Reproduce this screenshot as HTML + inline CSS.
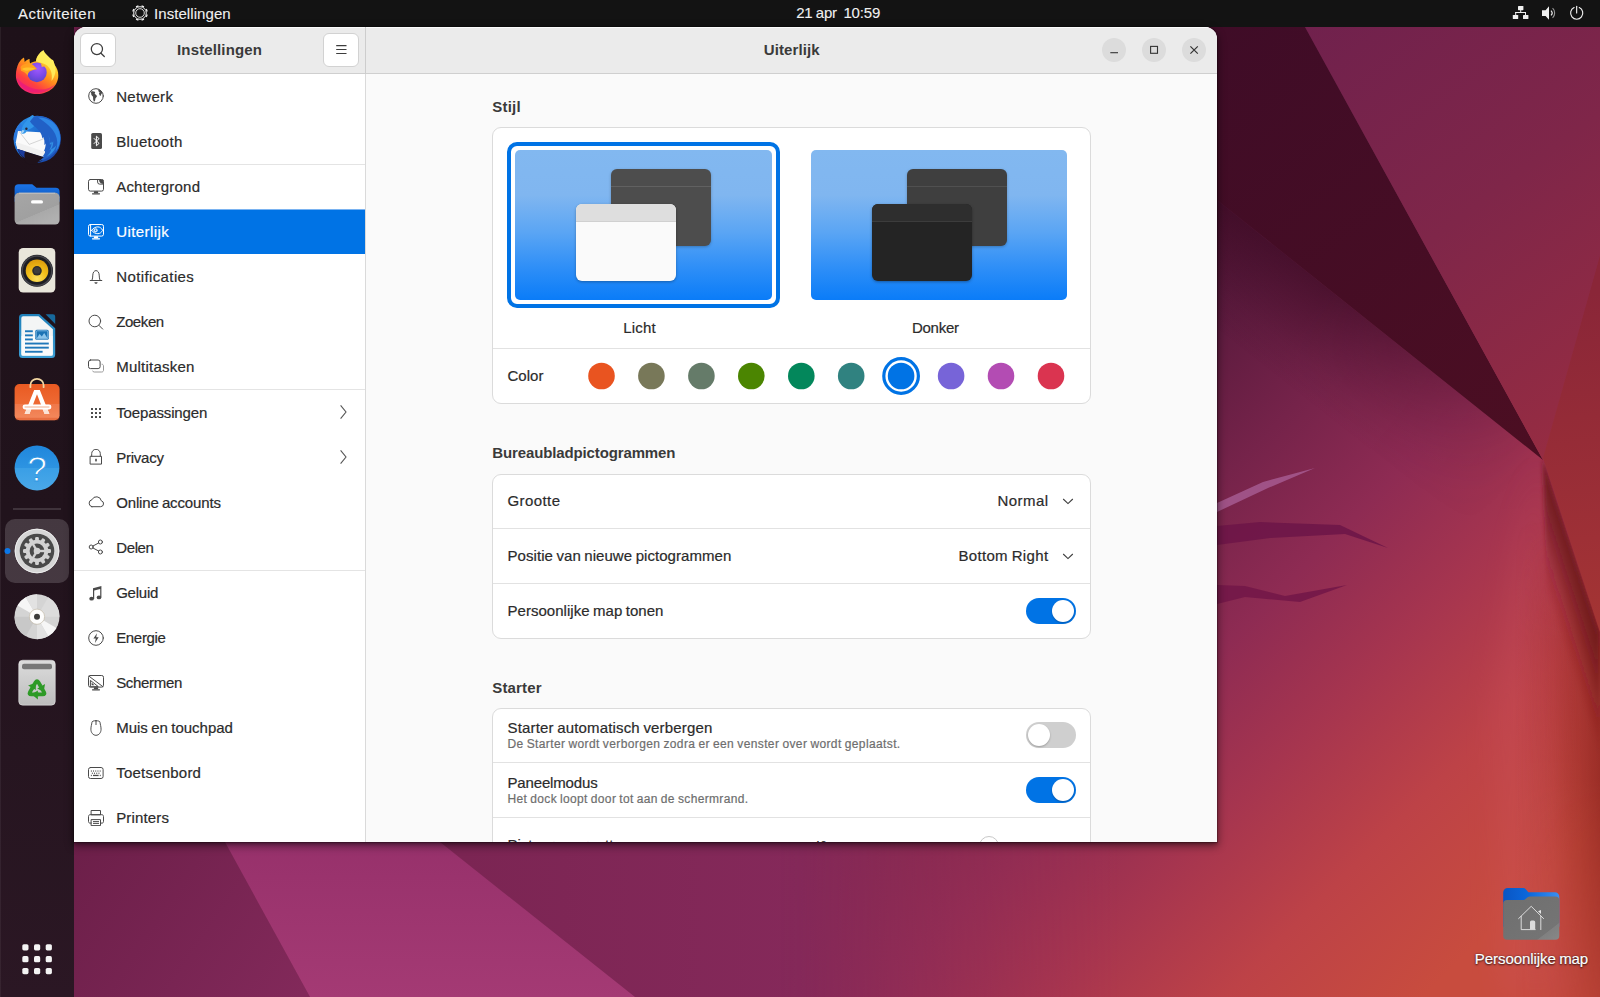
<!DOCTYPE html>
<html lang="nl"><head><meta charset="utf-8"><title>Instellingen</title>
<style>
html,body{margin:0;padding:0;width:1600px;height:997px;overflow:hidden;background:#300a24;}
body{position:relative;font-family:"Liberation Sans", sans-serif;font-size:15px;color:#2e2e2e;-webkit-font-smoothing:antialiased;}
div,svg{box-sizing:border-box;}
.abs{position:absolute;}

</style></head><body>
<svg class="abs" style="left:0;top:0" width="1600" height="997" viewBox="0 0 1600 997">
<defs>
<linearGradient id="wbase" x1="0" y1="0" x2="1600" y2="0" gradientUnits="userSpaceOnUse">
<stop offset="0" stop-color="#661c45"/><stop offset=".14" stop-color="#74224e"/><stop offset=".5" stop-color="#85295a"/>
<stop offset=".69" stop-color="#a63351"/><stop offset=".86" stop-color="#c54942"/><stop offset="1" stop-color="#c44a3a"/>
</linearGradient>
<linearGradient id="wD" x1="1217" y1="203" x2="1717" y2="703" gradientUnits="userSpaceOnUse">
<stop offset="0" stop-color="#4e1434"/><stop offset=".1" stop-color="#5a1a3d"/><stop offset=".28" stop-color="#75234a"/>
<stop offset=".45" stop-color="#8e2b53"/><stop offset=".62" stop-color="#a6354f"/><stop offset=".8" stop-color="#bd4247"/><stop offset="1" stop-color="#c84c3e"/>
</linearGradient>
<linearGradient id="mfade" x1="780" y1="0" x2="1120" y2="0" gradientUnits="userSpaceOnUse">
<stop offset="0" stop-color="#000"/><stop offset="1" stop-color="#fff"/>
</linearGradient>
<mask id="mD" maskUnits="userSpaceOnUse" x="0" y="0" width="1600" height="997"><rect width="1600" height="997" fill="url(#mfade)"/></mask>
<linearGradient id="wB" x1="1305" y1="27" x2="1600" y2="420" gradientUnits="userSpaceOnUse">
<stop offset="0" stop-color="#70214d"/><stop offset=".5" stop-color="#7f2649"/><stop offset="1" stop-color="#962c42"/>
</linearGradient>
<linearGradient id="wA" x1="1217" y1="27" x2="1543" y2="460" gradientUnits="userSpaceOnUse">
<stop offset="0" stop-color="#3f0c27"/><stop offset="1" stop-color="#4c0e22"/>
</linearGradient>
<linearGradient id="wC" x1="1543" y1="300" x2="1600" y2="700" gradientUnits="userSpaceOnUse">
<stop offset="0" stop-color="#8a2638"/><stop offset=".6" stop-color="#9e3036"/><stop offset="1" stop-color="#a83830"/>
</linearGradient>
<!-- crease shadow: perpendicular to line apex(1543,460)->(1600,640); vector points to the left of the line -->
<linearGradient id="wRidge" x1="1543" y1="460" x2="1428.6" y2="496.2" gradientUnits="userSpaceOnUse">
<stop offset="0" stop-color="#6e1a20" stop-opacity=".95"/><stop offset=".1" stop-color="#7a1e24" stop-opacity=".8"/><stop offset=".28" stop-color="#902830" stop-opacity=".4"/>
<stop offset=".42" stop-color="#c0445a" stop-opacity=".0"/><stop offset=".55" stop-color="#c8506a" stop-opacity=".22"/><stop offset=".8" stop-color="#c8506a" stop-opacity="0"/>
</linearGradient>
<linearGradient id="wTri" x1="0" y1="842" x2="0" y2="997" gradientUnits="userSpaceOnUse">
<stop offset="0" stop-color="#97316b"/><stop offset="1" stop-color="#a43a74"/>
</linearGradient>
<linearGradient id="wLeft" x1="74" y1="842" x2="300" y2="997" gradientUnits="userSpaceOnUse">
<stop offset="0" stop-color="#6c1f49"/><stop offset="1" stop-color="#82295a"/>
</linearGradient>
<linearGradient id="wEdge" x1="1500" y1="0" x2="1600" y2="0" gradientUnits="userSpaceOnUse">
<stop offset="0" stop-color="#a02a20" stop-opacity="0"/><stop offset="1" stop-color="#a02a20" stop-opacity=".55"/>
</linearGradient>
<filter id="bl9" x="-50%" y="-20%" width="200%" height="140%"><feGaussianBlur stdDeviation="7"/></filter>
<filter id="bl12" x="-50%" y="-20%" width="200%" height="140%"><feGaussianBlur stdDeviation="14"/></filter>
<filter id="bl14" x="-20%" y="-30%" width="140%" height="160%"><feGaussianBlur stdDeviation="13"/></filter>
<clipPath id="cLeft"><polygon points="1543,458 1600,632 1600,997 1200,997 1200,458"/></clipPath>
<linearGradient id="wSh" x1="1380" y1="330" x2="1318" y2="408.500" gradientUnits="userSpaceOnUse">
<stop offset="0" stop-color="#3a0a22" stop-opacity=".6"/><stop offset=".35" stop-color="#3a0a22" stop-opacity=".36"/><stop offset=".7" stop-color="#3a0a22" stop-opacity=".12"/><stop offset="1" stop-color="#3a0a22" stop-opacity="0"/>
</linearGradient>
<linearGradient id="gAlong" x1="1330" y1="290" x2="1535" y2="453.500" gradientUnits="userSpaceOnUse"><stop offset="0" stop-color="#fff"/><stop offset="1" stop-color="#000"/></linearGradient>
<mask id="mSh" maskUnits="userSpaceOnUse" x="1000" y="0" width="600" height="700"><rect x="1000" y="0" width="600" height="700" fill="url(#gAlong)"/></mask>
<linearGradient id="wCrease" x1="1543" y1="458" x2="1506" y2="470.100" gradientUnits="userSpaceOnUse">
<stop offset="0" stop-color="#6c181c" stop-opacity=".95"/><stop offset=".3" stop-color="#6c181c" stop-opacity=".68"/><stop offset=".65" stop-color="#6c181c" stop-opacity=".24"/><stop offset="1" stop-color="#6c181c" stop-opacity="0"/>
</linearGradient>
<linearGradient id="wEdgeH" x1="1515" y1="0" x2="1600" y2="0" gradientUnits="userSpaceOnUse">
<stop offset="0" stop-color="#86201a" stop-opacity="0"/><stop offset=".45" stop-color="#86201a" stop-opacity=".16"/><stop offset=".75" stop-color="#86201a" stop-opacity=".4"/><stop offset="1" stop-color="#86201a" stop-opacity=".66"/>
</linearGradient>
<linearGradient id="wEdgeV" x1="0" y1="520" x2="0" y2="997" gradientUnits="userSpaceOnUse">
<stop offset="0" stop-color="#000"/><stop offset=".25" stop-color="#fff"/><stop offset=".55" stop-color="#fff"/><stop offset="1" stop-color="#6a6a6a"/>
</linearGradient>
<mask id="mEdge" maskUnits="userSpaceOnUse" x="1490" y="520" width="110" height="477"><rect x="1490" y="520" width="110" height="477" fill="url(#wEdgeV)"/></mask>
<filter id="bl2" x="-30%" y="-10%" width="160%" height="120%"><feGaussianBlur stdDeviation="2.200"/></filter>
</defs>
<rect width="1600" height="997" fill="url(#wbase)"/>
<rect x="780" width="820" height="997" fill="url(#wD)" mask="url(#mD)"/>
<!-- soft shadow under wedge edge -->
<polygon points="1150,146.600 1543,460 1480,540 1087,226" fill="url(#wSh)" mask="url(#mSh)"/>
<!-- dark wedge -->
<polygon points="1000,27 1305,27 1543,460 1217,200 1000,27" fill="url(#wA)"/>
<!-- upper lighter facet -->
<polygon points="1305,27 1600,27 1600,255 1543,460" fill="url(#wB)"/>
<!-- right facet -->
<polygon points="1600,255 1543,458 1600,632" fill="url(#wC)"/>
<!-- crease shadow left of the line below apex -->
<g clip-path="url(#cLeft)">
<polygon points="1543,462 1518,540 1492,700 1500,997 1575,997 1550,700 1540,540" fill="#d0566c" opacity=".2" filter="url(#bl12)"/>
<rect x="1490" y="520" width="110" height="477" fill="url(#wEdgeH)" mask="url(#mEdge)"/>
<polygon points="1543,458 1600,632 1600,790 1552,790" fill="url(#wCrease)" filter="url(#bl2)"/>
</g>
<!-- tentacles -->
<polygon points="1217,503 1263,482 1315,468 1268,488 1217,512" fill="#a65a90" opacity=".85"/>
<polygon points="1217,526 1260,522 1340,525 1388,548 1345,534 1270,538 1217,545" fill="#6e1648" opacity=".9"/>
<polygon points="1217,585 1245,586 1285,596 1347,585 1300,602 1245,597 1217,604" fill="#731748" opacity=".9"/>
<!-- bottom-left facets -->
<polygon points="0,700 225,842 310,997 0,997" fill="url(#wLeft)"/>
<polygon points="225,842 440,842 635,997 310,997" fill="url(#wTri)"/>
</svg><div class="abs" style="left:0;top:0;width:1600px;height:27px;background:#131313"></div><div style="position:absolute;left:18px;top:3.5px;height:20px;line-height:20px;font-size:15px;font-weight:400;color:#f0f0f0;white-space:pre;letter-spacing:0.45px;-webkit-text-stroke:0.1px;">Activiteiten</div><div style="position:absolute;left:154px;top:3.5px;height:20px;line-height:20px;font-size:15px;font-weight:400;color:#f0f0f0;white-space:pre;letter-spacing:0.07px;-webkit-text-stroke:0.1px;">Instellingen</div><div style="position:absolute;left:538.2px;width:600px;text-align:center;margin-left:-0.08px;top:2.5px;height:20px;line-height:20px;font-size:15px;font-weight:400;color:#f0f0f0;white-space:pre;letter-spacing:-0.17px;word-spacing:-0.75px;-webkit-text-stroke:0.1px;">21 apr  10:59</div><svg class="abs" style="left:131px;top:4px" width="18" height="18" viewBox="-9 -9 18 18" fill="none" stroke="#f0f0f0"><circle r="4.300" stroke-width=".9"/><circle r="6.300" stroke-width="1"/><line x1="6.10" y1="2.53" x2="7.30" y2="3.02" stroke-width="2.600" stroke-linecap="butt"/><line x1="2.53" y1="6.10" x2="3.02" y2="7.30" stroke-width="2.600" stroke-linecap="butt"/><line x1="-2.53" y1="6.10" x2="-3.02" y2="7.30" stroke-width="2.600" stroke-linecap="butt"/><line x1="-6.10" y1="2.53" x2="-7.30" y2="3.02" stroke-width="2.600" stroke-linecap="butt"/><line x1="-6.10" y1="-2.53" x2="-7.30" y2="-3.02" stroke-width="2.600" stroke-linecap="butt"/><line x1="-2.53" y1="-6.10" x2="-3.02" y2="-7.30" stroke-width="2.600" stroke-linecap="butt"/><line x1="2.53" y1="-6.10" x2="3.02" y2="-7.30" stroke-width="2.600" stroke-linecap="butt"/><line x1="6.10" y1="-2.53" x2="7.30" y2="-3.02" stroke-width="2.600" stroke-linecap="butt"/></svg><svg class="abs" style="left:1512px;top:5px" width="17" height="15" viewBox="0 0 17 15" fill="#f0f0f0">
<rect x="6" y="1" width="5.4" height="4.2" rx=".6"/><rect x="8.2" y="5" width="1" height="2.4"/>
<rect x="3.2" y="7" width="10.8" height="1"/><rect x="3.2" y="7" width="1" height="3"/><rect x="13" y="7" width="1" height="3"/>
<rect x=".8" y="10" width="5.4" height="4" rx=".6"/><rect x="11" y="10" width="5.4" height="4" rx=".6"/></svg><svg class="abs" style="left:1540px;top:4px" width="18" height="18" viewBox="0 0 18 18">
<path d="M2 6.2h3.6L9 2.2v13.6L5.6 11.9H2z" fill="#f0f0f0"/>
<path d="M11 6.6a3.4 3.4 0 0 1 0 4.8" fill="none" stroke="#f0f0f0" stroke-width="1.2"/>
<path d="M12.6 4.2a6.6 6.6 0 0 1 0 9.6" fill="none" stroke="#9a9a9a" stroke-width="1.1"/></svg><svg class="abs" style="left:1568px;top:4px" width="18" height="18" viewBox="0 0 18 18" fill="none" stroke="#f0f0f0" stroke-width="1.15" stroke-linecap="round">
<path d="M6.1 3.6a6.1 6.1 0 1 0 5.2 0"/><path d="M8.65 2.2v6.8"/></svg><div class="abs" style="left:0;top:27px;width:74px;height:970px;background:linear-gradient(#1e1119 0%,#21131c 50%,#2b1724 100%)"></div><div class="abs" style="left:0;top:27px;width:1px;height:970px;background:rgba(255,255,255,.06)"></div><svg class="abs" style="left:0;top:27px" width="74" height="970" viewBox="0 27 74 970"><defs>
<linearGradient id="ffg" x1="52" y1="52" x2="24" y2="93" gradientUnits="userSpaceOnUse"><stop offset="0" stop-color="#fff36b"/><stop offset=".25" stop-color="#ffd02c"/><stop offset=".5" stop-color="#ff8c1c"/><stop offset=".75" stop-color="#ff4040"/><stop offset="1" stop-color="#f0207a"/></linearGradient>
<radialGradient id="ffp" cx=".55" cy=".3" r=".75"><stop offset="0" stop-color="#a05aff"/><stop offset=".55" stop-color="#7b4ae8"/><stop offset="1" stop-color="#5546c8"/></radialGradient>
<linearGradient id="ffl" x1="0" y1="0" x2="1" y2="1"><stop offset="0" stop-color="#ff9a1e"/><stop offset=".6" stop-color="#ffa51e"/><stop offset="1" stop-color="#ff8a16"/></linearGradient>
<linearGradient id="tbg" x1="0" y1="0" x2="1" y2="1"><stop offset="0" stop-color="#2f9bf0"/><stop offset=".5" stop-color="#1b63c9"/><stop offset="1" stop-color="#1a3fa0"/></linearGradient>
<linearGradient id="fig" x1="0" y1="0" x2=".6" y2="1"><stop offset="0" stop-color="#a6a6a6"/><stop offset=".7" stop-color="#a0a0a0"/><stop offset=".71" stop-color="#a9a9a9"/><stop offset="1" stop-color="#b0b0b0"/></linearGradient>
<linearGradient id="fib" x1="0" y1="0" x2="0" y2="1"><stop offset="0" stop-color="#1b74e8"/><stop offset="1" stop-color="#0b54b8"/></linearGradient>
<radialGradient id="rby" cx=".5" cy=".85" r=".9"><stop offset="0" stop-color="#fbe060"/><stop offset=".45" stop-color="#f2c01a"/><stop offset="1" stop-color="#d8960a"/></radialGradient>
<linearGradient id="swg" x1="0" y1="0" x2="0" y2="1"><stop offset="0" stop-color="#e95a22"/><stop offset=".55" stop-color="#ee6a34"/><stop offset=".56" stop-color="#f0784a"/><stop offset="1" stop-color="#f28a5e"/></linearGradient>
<linearGradient id="hpg" x1="0" y1="0" x2="0" y2="1"><stop offset="0" stop-color="#1f86dc"/><stop offset=".5" stop-color="#2d94e2"/><stop offset=".51" stop-color="#3a9fe6"/><stop offset="1" stop-color="#4aa8e8"/></linearGradient>
<linearGradient id="trg" x1="0" y1="0" x2="0" y2="1"><stop offset="0" stop-color="#dcdcdc"/><stop offset="1" stop-color="#bdbdbd"/></linearGradient>
<linearGradient id="wrg" x1="0" y1="0" x2="0" y2="1"><stop offset="0" stop-color="#1f7fb8"/><stop offset="1" stop-color="#3b9ed4"/></linearGradient>
</defs><g>
<path d="M24 57.500C24.400 59.200 24.400 60.600 24.700 61.900C26.200 60.200 28 59.200 29.600 58.900C29.500 60.500 29.700 62.200 30.200 63.400C32 62.300 34.200 61.500 36 61.300C36.300 57 39.500 52.500 43.400 50.200C44.500 53.500 48.500 56.500 51.800 59.700L52.900 60C53.600 61.500 54.200 63.200 54.600 64.800C57 67.800 58.400 71.600 58.300 75.500C58.300 86 49 94 37.200 94C25 94 15.900 86 15.900 75.500C15.900 70.500 17.200 66 18.700 63.100C20 60.800 22 58.600 24 57.500Z" fill="url(#ffg)"/>
<path d="M36 61.300C36.300 57 39.500 52.500 43.400 50.200C44.500 53.500 48.500 56.500 51.800 59.700L52.900 60C54 62 54.600 64.800 54.600 64.800C56.500 69.500 55.500 76.500 51.500 81C53 73 50 67 45.500 64.600C42.500 63.200 39 62.500 36 61.300Z" fill="#fff162" opacity=".85"/>
<path d="M17 78c1.500 7.500 9 14.200 19.500 14.800 8 .4 15-3 19-8.800-4.500 4.200-11 6.200-17.800 5.300-9.500-1.300-16.500-6.300-20.700-11.300z" fill="#e3118a" opacity=".55"/>
<circle cx="36.900" cy="72.400" r="9.800" fill="url(#ffp)"/>
<path d="M40.500 63.400C42.600 63.900 44.600 65.200 45.700 66.900C44.100 66.200 42.800 66.300 41.700 66.900C41.800 65.500 41.300 64.400 40.500 63.400Z" fill="#ffb52a"/>
<path d="M20.500 67C22.500 64.400 27 63 30.200 63.400C32.500 64.200 34.800 66.300 37.200 69.200C34.500 69.600 31.500 70 29.600 71.600C28.300 72.700 27.600 74.200 27.800 76C26.300 73.200 23.500 71.300 21 70.800Z" fill="url(#ffl)"/>
<path d="M22 68.900C25 67.200 31 67 35.600 68.700C32 69.700 29.500 70.100 27.500 70.700C25.500 70.700 23.400 70.100 22 68.900Z" fill="#ffc62e" opacity=".9"/>
</g><g>
<circle cx="37.200" cy="139.300" r="23.600" fill="url(#tbg)"/>
<path d="M13.600 139.300a23.600 23.600 0 0 1 6.800-16.600l3.400 6.600-5.800 14.600z" fill="#2a7ae0"/>
<path d="M18 130.900l26.700 1.600 2.800 4-3.300 20.800-26.700-8.400-1.700-6.500z" fill="#fafafa"/>
<path d="M15.800 142.400l1.700 6.500 26.700 8.400 1-5.200-26-9.200z" fill="#f0f0f0"/>
<path d="M19.200 131.600l10 12.800 17-6.600" fill="none" stroke="#c4c4c4" stroke-width=".7" stroke-linejoin="round"/>
<path d="M17.500 148.900l26.700 8.400-2.200 3.400-4.200 1.700-1 2.600-9.600-1.200-4.800-6.200-3-4.400z" fill="#1f121a"/>
<path d="M17.500 148.900c.8 3 3.500 6.800 7.400 9.200-.8-2.400-.6-4.800.2-6.900z" fill="#1a3a9a"/>
<path d="M21.600 133.800c-.6-4.600 1.200-9.200 4.400-12.200 1.600-2.800 4-5.200 6.400-6.600 1 .2 1.600.8 1.600 1.600 5.400-.8 11.200.6 15.600 4-5.600-.8-10.400.6-13.800 3.400-1.800 2.600-3.800 4.200-6 5-1.800.6-3 1.600-3.800 3.200-.6 1.200-2.400 1.600-4.400 1.600z" fill="#3296ea"/>
<path d="M21.600 133.800c1.200-.6 2.400-1.800 3-3.200l-2.400-.6z" fill="#a8d4f6"/>
<path d="M34 116.600c9.500-2 19.600 2.400 24.200 11.200 4.400 8.600 2.600 19.200-4.400 25.800-3.600 3.400-8.400 6.200-15.600 8 2.600-1.800 4.800-3.600 6-5.200l-2.200.6c2-2.200 3.200-4.400 3.600-6.600l-1.800 1c1.400-2.600 2-5.200 1.800-7.800l-1.400 1.600c.6-3 .2-5.800-1-8.200l-.8 1.600c-.6-4.400-2.800-8.200-6.200-10.800-2.600-2-4.600-3.800-6.200-6.200 1.400-2 3-3.600 4-5z" fill="#2160c6"/>
<path d="M38 117.500c8.200-.4 16.200 3.800 20 11.400 3.600 7.200 2.800 16-2.200 22.400 2.200-5.800 2-12-.6-17.400-3-6.200-8.800-10.800-17.200-16.400z" fill="#2e86e4"/>
<path d="M47.600 134.600c1.800 2.400 2.600 5.400 2.400 8.600l1.600-1.800c.2 3-.6 6-2.200 8.600l2-1c-.8 3-2.600 5.600-5 7.800 5-2.400 8.600-6.600 10-11.600-1.600 2-3.600 3.400-5.400 4 1.600-2.400 2.400-5.200 2.200-8-.8 1.600-2 2.800-3.400 3.600.4-3.600-.4-7.200-2.200-10.200z" fill="#3aa0ee" opacity=".75"/>
<circle cx="26.400" cy="128.800" r="1.200" fill="#2a2230"/>
</g><g>
<path d="M14.600 188.300a4 4 0 0 1 4-4h13.600l4.300 3.400h19.100a4 4 0 0 1 4 4v10h-45z" fill="url(#fib)"/>
<rect x="14.600" y="192.800" width="45" height="31.700" rx="4.500" fill="url(#fig)"/>
<path d="M19 193.200h36.200" stroke="#d2d2d2" stroke-width=".9" opacity=".8"/>
<rect x="31" y="200.300" width="12" height="3.300" rx="1.600" fill="#fff"/>
</g><g>
<rect x="18.700" y="248" width="36.600" height="44.600" rx="4.500" fill="#e9e6db"/>
<circle cx="37" cy="270.800" r="16" fill="#1d1d22"/>
<circle cx="37" cy="270.800" r="14.800" fill="none" stroke="#45454c" stroke-width="1.500"/>
<circle cx="37" cy="270.800" r="11.300" fill="url(#rby)"/>
<circle cx="37" cy="270.800" r="4.800" fill="#2c2c2c"/>
<circle cx="37" cy="270.400" r="3.200" fill="#444" opacity=".7"/>
</g><g>
<path d="M22.500 314h16.800l15.900 14.300v26.200a3.500 3.500 0 0 1-3.500 3.500h-29.200a3.500 3.500 0 0 1-3.500-3.500v-37a3.500 3.500 0 0 1 3.500-3.500z" fill="url(#wrg)"/>
<path d="M23.200 316.300h15.300l14.400 13v24.600a1.900 1.900 0 0 1-1.900 1.900h-27.800a1.900 1.900 0 0 1-1.900-1.900v-35.700a1.900 1.900 0 0 1 1.900-1.900z" fill="#f4f5f5"/>
<path d="M21.300 336h31.600v17.900a1.900 1.900 0 0 1-1.900 1.900h-27.800a1.900 1.900 0 0 1-1.900-1.900z" fill="#fff" opacity=".55"/>
<path d="M45.600 314.300h7.300a2.300 2.300 0 0 1 2.300 2.300v7.400z" fill="#17699c"/>
<rect x="35.200" y="329.800" width="13.600" height="10" rx="1.600" fill="#1b72b4"/>
<path d="M36.600 338.600l3-4.600 2.200 2.600 2.400-3.600 3.400 5.600z" fill="#8cc4ea"/>
<rect x="36.200" y="330.800" width="11.600" height="8" rx="1" fill="none" stroke="#9fd0ef" stroke-width=".7"/>
<rect x="25" y="330.300" width="7.800" height="1.900" fill="#1f78ba"/><rect x="25" y="334.400" width="7.800" height="1.900" fill="#1f78ba"/><rect x="25" y="338.500" width="7.800" height="1.900" fill="#1f78ba"/>
<rect x="25" y="342.600" width="23.800" height="1.900" fill="#1f78ba"/><rect x="25" y="346.700" width="23.800" height="1.900" fill="#1f78ba"/><rect x="25" y="350.800" width="17.600" height="1.900" fill="#1f78ba"/>
</g><g>
<rect x="14.600" y="384" width="45" height="36.200" rx="5" fill="url(#swg)"/>
<rect x="15.600" y="417.800" width="43" height="2.400" rx="1.200" fill="#d9481a" opacity=".4"/>
<path d="M30.400 387.200v-2a6.600 6.400 0 0 1 13.200 0v2" fill="none" stroke="#f3d7a2" stroke-width="1.800" stroke-linecap="round"/>
<path d="M24.600 414l9.600-24h5.600l9.600 24h-4.800l-7.600-19.800-7.600 19.800z" fill="#fff"/>
<path d="M24.600 414l3-7.600h4.800l-3 7.600zM49.400 414l-3-7.600h-4.800l3 7.600z" fill="#fbe3d6"/>
<rect x="22.600" y="404.600" width="28.800" height="4.800" rx="2.400" fill="#fff"/>
<rect x="24.400" y="406.300" width="25.200" height="1.400" rx=".7" fill="#f6c9b4"/>
</g><g>
<circle cx="37" cy="468" r="22.400" fill="url(#hpg)"/>
<text x="37" y="480.500" text-anchor="middle" font-family="'Liberation Sans',sans-serif" font-size="35" fill="#fff" stroke="#2f96e3" stroke-width=".9">?</text>
</g><rect x="13" y="508.500" width="48" height="1" fill="#fff" opacity=".28"/><rect x="5" y="519" width="64" height="64" rx="10" fill="#fff" opacity=".16"/><circle cx="7.500" cy="551" r="3" fill="#0b78ea"/><g transform="translate(37 551)"><circle r="22.300" fill="#d6d6d6"/><circle r="21.800" fill="none" stroke="#ececec" stroke-width="1"/><circle r="17.300" fill="#4a4a4a"/><rect x="-1.900" y="-14" width="3.800" height="5" rx="1.200" fill="#d2d2d2" transform="rotate(0)"/><rect x="-1.900" y="-14" width="3.800" height="5" rx="1.200" fill="#d2d2d2" transform="rotate(30)"/><rect x="-1.900" y="-14" width="3.800" height="5" rx="1.200" fill="#d2d2d2" transform="rotate(60)"/><rect x="-1.900" y="-14" width="3.800" height="5" rx="1.200" fill="#d2d2d2" transform="rotate(90)"/><rect x="-1.900" y="-14" width="3.800" height="5" rx="1.200" fill="#d2d2d2" transform="rotate(120)"/><rect x="-1.900" y="-14" width="3.800" height="5" rx="1.200" fill="#d2d2d2" transform="rotate(150)"/><rect x="-1.900" y="-14" width="3.800" height="5" rx="1.200" fill="#d2d2d2" transform="rotate(180)"/><rect x="-1.900" y="-14" width="3.800" height="5" rx="1.200" fill="#d2d2d2" transform="rotate(210)"/><rect x="-1.900" y="-14" width="3.800" height="5" rx="1.200" fill="#d2d2d2" transform="rotate(240)"/><rect x="-1.900" y="-14" width="3.800" height="5" rx="1.200" fill="#d2d2d2" transform="rotate(270)"/><rect x="-1.900" y="-14" width="3.800" height="5" rx="1.200" fill="#d2d2d2" transform="rotate(300)"/><rect x="-1.900" y="-14" width="3.800" height="5" rx="1.200" fill="#d2d2d2" transform="rotate(330)"/><circle r="11.300" fill="#d2d2d2"/><circle r="7.400" fill="#4a4a4a"/><circle r="3.300" fill="#d2d2d2"/><rect x="-1.200" y="-8" width="2.400" height="8" fill="#d2d2d2" transform="rotate(90)"/><rect x="-1.200" y="-8" width="2.400" height="8" fill="#d2d2d2" transform="rotate(210)"/><rect x="-1.200" y="-8" width="2.400" height="8" fill="#d2d2d2" transform="rotate(330)"/></g><g transform="translate(37 616.700)"><circle r="22.500" fill="#d4d4d4"/><path d="M0 0L-19.500 -11.200A22.500 22.500 0 0 1 -11.200 -19.500z" fill="#f6f6f6"/><path d="M0 0L19.500 11.200A22.500 22.500 0 0 1 11.200 19.500z" fill="#f6f6f6"/><path d="M0 0L-11.200 -19.500A22.500 22.500 0 0 1 0 -22.500z" fill="#e2e2e2"/><path d="M0 0L11.200 19.500A22.500 22.500 0 0 1 0 22.500z" fill="#e2e2e2"/><path d="M0 0L22.500 0A22.500 22.500 0 0 0 11.200 -19.500z" fill="#dcdcdc"/><path d="M0 0L-22.500 0A22.500 22.500 0 0 0 -11.200 19.500z" fill="#c8c8c8"/><circle r="7.600" fill="#fdfdfd" stroke="#b9ae9a" stroke-width=".6"/><circle r="3" fill="#3c3c3c"/></g><g>
<rect x="18.700" y="660.200" width="36.600" height="45" rx="4" fill="url(#trg)"/>
<rect x="18.700" y="660.200" width="36.600" height="45" rx="4" fill="none" stroke="#eee" stroke-width=".8" opacity=".6"/>
<rect x="22" y="663.800" width="30" height="5.400" rx="2" fill="#777"/>
<g transform="translate(37 689.600) scale(1.32)"><g transform="rotate(0)"><path d="M-3.700 -0.800L-1 -5.600Q0 -7.300 1 -5.600L2.800 -2.500" fill="none" stroke="#2e9a27" stroke-width="2.900" stroke-linejoin="round"/><path d="M6.100 -4.300L0.200 -0.900L5 1.800Z" fill="#2e9a27"/></g><g transform="rotate(120)"><path d="M-3.700 -0.800L-1 -5.600Q0 -7.300 1 -5.600L2.800 -2.500" fill="none" stroke="#2e9a27" stroke-width="2.900" stroke-linejoin="round"/><path d="M6.100 -4.300L0.200 -0.900L5 1.800Z" fill="#2e9a27"/></g><g transform="rotate(240)"><path d="M-3.700 -0.800L-1 -5.600Q0 -7.300 1 -5.600L2.800 -2.500" fill="none" stroke="#2e9a27" stroke-width="2.900" stroke-linejoin="round"/><path d="M6.100 -4.300L0.200 -0.900L5 1.800Z" fill="#2e9a27"/></g></g>
</g><rect x="22.3" y="944.2" width="6.200" height="6.200" rx="1.600" fill="#f4f4f4"/><rect x="34.0" y="944.2" width="6.200" height="6.200" rx="1.600" fill="#f4f4f4"/><rect x="45.7" y="944.2" width="6.200" height="6.200" rx="1.600" fill="#f4f4f4"/><rect x="22.3" y="956.1" width="6.200" height="6.200" rx="1.600" fill="#f4f4f4"/><rect x="34.0" y="956.1" width="6.200" height="6.200" rx="1.600" fill="#f4f4f4"/><rect x="45.7" y="956.1" width="6.200" height="6.200" rx="1.600" fill="#f4f4f4"/><rect x="22.3" y="968.0" width="6.200" height="6.200" rx="1.600" fill="#f4f4f4"/><rect x="34.0" y="968.0" width="6.200" height="6.200" rx="1.600" fill="#f4f4f4"/><rect x="45.7" y="968.0" width="6.200" height="6.200" rx="1.600" fill="#f4f4f4"/></svg><svg class="abs" style="left:1500px;top:884px" width="64" height="60" viewBox="1500 884 64 60">
<defs><linearGradient id="dfb" x1="0" y1="0" x2="1" y2="0"><stop offset="0" stop-color="#0a55c4"/><stop offset=".45" stop-color="#0b68dc"/><stop offset="1" stop-color="#3a8ff0"/></linearGradient>
<linearGradient id="dfg" x1="0" y1="0" x2="1" y2="1"><stop offset="0" stop-color="#6f6f6f"/><stop offset=".8" stop-color="#747474"/><stop offset=".81" stop-color="#808080"/><stop offset="1" stop-color="#888"/></linearGradient></defs>
<path d="M1503.200 892.500a4.500 4.500 0 0 1 4.500-4.500h15.300c1.300 0 2 .4 2.800 1.300l2.600 3h26.400a4.500 4.500 0 0 1 4.500 4.500v30h-56.100z" fill="url(#dfb)"/>
<path d="M1503.200 904a4 4 0 0 1 4-4h15.800c1.200 0 2-.4 2.800-1.200l1.800-1.500c.8-.6 1.500-.8 2.600-.8h25.100a4 4 0 0 1 4 4v35.200a4 4 0 0 1-4 4h-48.100a4 4 0 0 1-4-4z" fill="url(#dfg)"/>
<g fill="none" stroke="#e6e6e6" stroke-width=".9" stroke-linecap="round" stroke-linejoin="round"><path d="M1518.600 918.600l12.600-12.300 12.400 12.300M1521.200 916.300v13.300h14M1540.800 916.300v13.300"/></g>
<path d="M1530 929.600v-7.600a1.600 1.600 0 0 1 1.600-1.600h2a1.600 1.600 0 0 1 1.600 1.600v7.600z" fill="#dcdcdc"/>
<path d="M1538 911.200l3-1.200v4z" fill="#e6e6e6"/>
</svg><div style="position:absolute;left:1231.5px;width:600px;text-align:center;margin-left:-0.03px;top:949.0px;height:20px;line-height:20px;font-size:15px;font-weight:400;color:#ffffff;white-space:pre;letter-spacing:-0.06px;word-spacing:-0.75px;-webkit-text-stroke:0.2px;text-shadow:0 1px 2px rgba(0,0,0,.75),0 0 2px rgba(0,0,0,.5)">Persoonlijke map</div><div class="abs" style="left:74px;top:27px;width:1143px;height:815px;border-radius:12px 12px 0 0;box-shadow:0 0 0 1px rgba(0,0,0,.18),0 3px 9px 1px rgba(0,0,0,.45),0 2px 3px rgba(0,0,0,.25)"></div><div class="abs" style="left:74px;top:27px;width:1143px;height:815px;border-radius:12px 12px 0 0;overflow:hidden;background:#fafafa"><div class="abs" style="left:0;top:0;width:1143px;height:46px;background:#ebebeb"></div><div class="abs" style="left:0;top:0;width:1143px;height:1px;background:#fbfbfb"></div><div class="abs" style="left:0;top:46px;width:1143px;height:1px;background:#cfcfcf"></div><div class="abs" style="left:0;top:47px;width:291px;height:768px;background:#ffffff"></div><div class="abs" style="left:291px;top:0;width:1px;height:47px;background:#cdcdcd"></div><div class="abs" style="left:291px;top:47px;width:1px;height:768px;background:#dadada"></div></div><div class="abs" style="left:80px;top:33px;width:36px;height:34px;border-radius:6px;background:#fff;border:1px solid #d2d2d2"></div><div class="abs" style="left:323px;top:33px;width:36px;height:34px;border-radius:6px;background:#fff;border:1px solid #d2d2d2"></div><svg class="abs" style="left:89px;top:41px" width="18" height="18" viewBox="0 0 18 18" fill="none" stroke="#3d3d3d" stroke-width="1.250" stroke-linecap="round"><circle cx="7.900" cy="8.100" r="5.600"/><path d="M12 12.200l3.300 3.300"/></svg><svg class="abs" style="left:333px;top:41px" width="18" height="18" viewBox="0 0 18 18" stroke="#3d3d3d" stroke-width="1.100"><path d="M3.200 4.600h10.300M3.200 8.500h10.300M3.200 12.500h10.300"/></svg><div style="position:absolute;left:-80.5px;width:600px;text-align:center;margin-left:0.07px;top:39.5px;height:20px;line-height:20px;font-size:15px;font-weight:700;color:#3a3a3a;white-space:pre;letter-spacing:0.14px;-webkit-text-stroke:0px;">Instellingen</div><div style="position:absolute;left:491.70000000000005px;width:600px;text-align:center;margin-left:0.05px;top:39.5px;height:20px;line-height:20px;font-size:15px;font-weight:700;color:#3a3a3a;white-space:pre;letter-spacing:0.11px;-webkit-text-stroke:0px;">Uiterlijk</div><div class="abs" style="left:1102.3px;top:38.4px;width:23.4px;height:23.4px;border-radius:12px;background:#dcdcdc"></div><div class="abs" style="left:1142.3px;top:38.4px;width:23.4px;height:23.4px;border-radius:12px;background:#dcdcdc"></div><div class="abs" style="left:1182.3px;top:38.4px;width:23.4px;height:23.4px;border-radius:12px;background:#dcdcdc"></div><svg class="abs" style="left:1105.700px;top:42px" width="16" height="16" viewBox="0 0 16 16" stroke="#333" stroke-width="1.100" fill="none"><path d="M4.300 10.700h7.700"/></svg><svg class="abs" style="left:1145.700px;top:42px" width="16" height="16" viewBox="0 0 16 16" stroke="#333" stroke-width="1.100" fill="none"><rect x="4.600" y="4.400" width="6.900" height="6.900"/></svg><svg class="abs" style="left:1185.700px;top:42px" width="16" height="16" viewBox="0 0 16 16" stroke="#333" stroke-width="1.200" fill="none"><path d="M4.400 4.300l7.400 7.400M11.800 4.300l-7.400 7.400"/></svg><div class="abs" style="left:74px;top:164px;width:291px;height:1px;background:#e4e4e4"></div><div class="abs" style="left:74px;top:389px;width:291px;height:1px;background:#e4e4e4"></div><div class="abs" style="left:74px;top:570px;width:291px;height:1px;background:#e4e4e4"></div><div class="abs" style="left:74px;top:209px;width:291px;height:1px;background:#7ab3f1"></div><div class="abs" style="left:74px;top:210px;width:291px;height:44px;background:#0073e5"></div><div style="position:absolute;left:116.2px;top:86.7px;height:20px;line-height:20px;font-size:15px;font-weight:400;color:#2b2b2b;white-space:pre;letter-spacing:0.28px;-webkit-text-stroke:0.2px;">Netwerk</div><svg class="abs" style="left:88px;top:88.3px" width="16" height="16" viewBox="0 0 16 16"><circle cx="8" cy="8" r="7.300" stroke="#4a4a4a" fill="none" stroke-width="1" stroke-linecap="round" stroke-linejoin="round" stroke-width="1.100"/><path fill="#4a4a4a" d="M3.200 3.600c1.200-.6 2.600-.4 3.600.2.600.6.400 1.300-.2 1.700l.9 1c1 .5 1.600 1.400 1.300 2.300l-1.300 1.500-.5 2.600-1.100.9-.7-2.400-.2-2.600-1.600-1.700-.2-1.500c-.5-.6-.5-1.300 0-2zM9.600 1.200c1.800.3 3.500 1.400 4.500 3l.6 1.800c-.5-.6-1.200-.5-1.500.2l-.2 1.600-1.200-.4-.9-1.800.9-1.100c-.9-.3-1.400-.9-1.300-1.700z"/></svg><div style="position:absolute;left:116.2px;top:131.59px;height:20px;line-height:20px;font-size:15px;font-weight:400;color:#2b2b2b;white-space:pre;letter-spacing:0.35px;-webkit-text-stroke:0.2px;">Bluetooth</div><svg class="abs" style="left:88px;top:133.2px" width="16" height="16" viewBox="0 0 16 16"><rect x="3.200" y="0" width="10.800" height="16" rx="1.600" fill="#4a4a4a"/><path d="M5.800 5.200l5.200 5.200-2.600 2.400v-9.600l2.600 2.400-5.200 5.200" fill="none" stroke="#fff" stroke-width="1" stroke-linejoin="round"/></svg><div style="position:absolute;left:116.2px;top:177.48000000000002px;height:20px;line-height:20px;font-size:15px;font-weight:400;color:#2b2b2b;white-space:pre;letter-spacing:0.21px;-webkit-text-stroke:0.2px;">Achtergrond</div><svg class="abs" style="left:88px;top:179.1px" width="16" height="16" viewBox="0 0 16 16"><rect x=".500" y=".500" width="15" height="11.600" rx="1.800" stroke="#4a4a4a" fill="none" stroke-width="1" stroke-linecap="round" stroke-linejoin="round" stroke-width="1.100"/><path d="M9.600.500v2.600a2 2 0 0 0 2 2h3.900" stroke="#4a4a4a" fill="none" stroke-width="1" stroke-linecap="round" stroke-linejoin="round"/><path d="M11 .800l4.300 0 0 4.100c-2.500 0-4.300-1.600-4.300-4.100z" fill="#4a4a4a"/><path d="M6.200 12.300h3.600l.5 2h-4.600z" fill="#4a4a4a"/><rect x="4" y="14.200" width="8" height="1.200" rx=".4" fill="#4a4a4a"/></svg><div style="position:absolute;left:116.2px;top:222.37px;height:20px;line-height:20px;font-size:15px;font-weight:400;color:#ffffff;white-space:pre;letter-spacing:0.43px;-webkit-text-stroke:0.2px;">Uiterlijk</div><svg class="abs" style="left:88px;top:224.0px" width="16" height="16" viewBox="0 0 16 16"><rect x=".500" y=".500" width="15" height="11.600" rx="1.800" stroke="#ffffff" fill="none" stroke-width="1" stroke-linecap="round" stroke-linejoin="round" stroke-width="1"/><path d="M2.600.500v11.600" stroke="#ffffff" fill="none" stroke-width="1" stroke-linecap="round" stroke-linejoin="round" stroke-width=".8"/><path d="M3.600 6.300c1.800-2.600 4.200-3.400 6.300-3.400s3.600 1.400 4.800 3.400c-1.200 2-2.700 3.400-4.800 3.400s-4.500-.8-6.300-3.400z" stroke="#ffffff" fill="none" stroke-width="1" stroke-linecap="round" stroke-linejoin="round" stroke-width=".9"/><circle cx="7.600" cy="6.300" r="2.100" fill="#ffffff" opacity=".8"/><circle cx="7.600" cy="6.300" r=".7" fill="#0073e5"/><path d="M6.200 12.300h3.600l.5 2h-4.600z" fill="#ffffff"/><rect x="4" y="14.200" width="8" height="1.200" rx=".4" fill="#ffffff"/></svg><div style="position:absolute;left:116.2px;top:267.26px;height:20px;line-height:20px;font-size:15px;font-weight:400;color:#2b2b2b;white-space:pre;letter-spacing:0.39px;-webkit-text-stroke:0.2px;">Notificaties</div><svg class="abs" style="left:88px;top:268.9px" width="16" height="16" viewBox="0 0 16 16"><path d="M2.200 11.500h11.600M4 11.300c.6-1.500.7-3.200.8-5.200.1-2.600 1.400-4.500 3.200-4.500s3.100 1.900 3.200 4.500c.1 2 .2 3.700.8 5.200" stroke="#4a4a4a" fill="none" stroke-width="1" stroke-linecap="round" stroke-linejoin="round"/><path d="M6.400 13.200h3.200c-.2 1-.8 1.500-1.600 1.500s-1.400-.5-1.600-1.500z" fill="#4a4a4a"/></svg><div style="position:absolute;left:116.2px;top:312.15px;height:20px;line-height:20px;font-size:15px;font-weight:400;color:#2b2b2b;white-space:pre;letter-spacing:-0.41px;-webkit-text-stroke:0.2px;">Zoeken</div><svg class="abs" style="left:88px;top:313.8px" width="16" height="16" viewBox="0 0 16 16"><circle cx="6.800" cy="7" r="5.800" stroke="#4a4a4a" fill="none" stroke-width="1" stroke-linecap="round" stroke-linejoin="round" stroke-width="1.100"/><path d="M11 11.400l3.700 3.700" stroke="#4a4a4a" fill="none" stroke-width="1" stroke-linecap="round" stroke-linejoin="round" stroke-width="1.100"/></svg><div style="position:absolute;left:116.2px;top:357.04px;height:20px;line-height:20px;font-size:15px;font-weight:400;color:#2b2b2b;white-space:pre;letter-spacing:0.24px;-webkit-text-stroke:0.2px;">Multitasken</div><svg class="abs" style="left:88px;top:358.6px" width="16" height="16" viewBox="0 0 16 16"><path d="M13.600 5.200c1.300 0 1.900.8 1.900 1.800v4.300c0 1-.7 1.700-1.800 1.700h-7.400c-1 0-1.600-.5-1.700-1.300" stroke="#9a9a9a" fill="none" stroke-width="1"/><rect x=".500" y="1" width="11.600" height="8.600" rx="2" stroke="#4a4a4a" fill="none" stroke-width="1" stroke-linecap="round" stroke-linejoin="round" stroke-width="1.200"/></svg><div style="position:absolute;left:116.2px;top:402.93px;height:20px;line-height:20px;font-size:15px;font-weight:400;color:#2b2b2b;white-space:pre;letter-spacing:-0.13px;-webkit-text-stroke:0.2px;">Toepassingen</div><svg class="abs" style="left:88px;top:404.5px" width="16" height="16" viewBox="0 0 16 16"><rect x="3" y="3" width="2" height="2" rx=".3" fill="#4a4a4a"/><rect x="7" y="3" width="2" height="2" rx=".3" fill="#4a4a4a"/><rect x="11" y="3" width="2" height="2" rx=".3" fill="#4a4a4a"/><rect x="3" y="7" width="2" height="2" rx=".3" fill="#4a4a4a"/><rect x="7" y="7" width="2" height="2" rx=".3" fill="#4a4a4a"/><rect x="11" y="7" width="2" height="2" rx=".3" fill="#4a4a4a"/><rect x="3" y="11" width="2" height="2" rx=".3" fill="#4a4a4a"/><rect x="7" y="11" width="2" height="2" rx=".3" fill="#4a4a4a"/><rect x="11" y="11" width="2" height="2" rx=".3" fill="#4a4a4a"/></svg><div style="position:absolute;left:116.2px;top:447.82px;height:20px;line-height:20px;font-size:15px;font-weight:400;color:#2b2b2b;white-space:pre;letter-spacing:-0.23px;-webkit-text-stroke:0.2px;">Privacy</div><svg class="abs" style="left:88px;top:449.4px" width="16" height="16" viewBox="0 0 16 16"><rect x="2.500" y="7.300" width="11" height="7.800" stroke="#4a4a4a" fill="none" stroke-width="1" stroke-linecap="round" stroke-linejoin="round" stroke-linejoin="miter"/><path d="M3.700 7.200v-2.600a4.300 4.300 0 0 1 8.600 0v2.600" stroke="#4a4a4a" fill="none" stroke-width="1" stroke-linecap="round" stroke-linejoin="round"/><rect x="7.200" y="9.800" width="1.600" height="2.600" fill="#4a4a4a"/></svg><div style="position:absolute;left:116.2px;top:492.71px;height:20px;line-height:20px;font-size:15px;font-weight:400;color:#2b2b2b;white-space:pre;letter-spacing:-0.15px;word-spacing:-0.75px;-webkit-text-stroke:0.2px;">Online accounts</div><svg class="abs" style="left:88px;top:494.3px" width="16" height="16" viewBox="0 0 16 16"><path d="M3.800 12.700h8.800a3 3 0 0 0 .7-5.900 4.900 4.900 0 0 0-9.300-1.100 3.600 3.600 0 0 0-.2 7z" stroke="#4a4a4a" fill="none" stroke-width="1" stroke-linecap="round" stroke-linejoin="round"/></svg><div style="position:absolute;left:116.2px;top:537.6px;height:20px;line-height:20px;font-size:15px;font-weight:400;color:#2b2b2b;white-space:pre;letter-spacing:-0.36px;-webkit-text-stroke:0.2px;">Delen</div><svg class="abs" style="left:88px;top:539.2px" width="16" height="16" viewBox="0 0 16 16"><circle cx="3.200" cy="8" r="2" stroke="#4a4a4a" fill="none" stroke-width="1" stroke-linecap="round" stroke-linejoin="round"/><circle cx="12.400" cy="3" r="2" stroke="#4a4a4a" fill="none" stroke-width="1" stroke-linecap="round" stroke-linejoin="round"/><circle cx="12.400" cy="13" r="2" stroke="#4a4a4a" fill="none" stroke-width="1" stroke-linecap="round" stroke-linejoin="round"/><path d="M5 7l5.600-3M5 9l5.600 3" stroke="#4a4a4a" fill="none" stroke-width="1" stroke-linecap="round" stroke-linejoin="round"/></svg><div style="position:absolute;left:116.2px;top:583.49px;height:20px;line-height:20px;font-size:15px;font-weight:400;color:#2b2b2b;white-space:pre;letter-spacing:-0.23px;-webkit-text-stroke:0.2px;">Geluid</div><svg class="abs" style="left:88px;top:585.1px" width="16" height="16" viewBox="0 0 16 16"><path d="M5 3.200l8.400-2.200v11.200h-1.200v-8.300l-6 1.500v8.600h-1.200z" fill="#4a4a4a"/><ellipse cx="3.600" cy="13.700" rx="2.300" ry="1.900" fill="#4a4a4a"/><ellipse cx="11" cy="12.400" rx="2.300" ry="1.900" fill="#4a4a4a"/></svg><div style="position:absolute;left:116.2px;top:628.3800000000001px;height:20px;line-height:20px;font-size:15px;font-weight:400;color:#2b2b2b;white-space:pre;letter-spacing:-0.33px;-webkit-text-stroke:0.2px;">Energie</div><svg class="abs" style="left:88px;top:630.0px" width="16" height="16" viewBox="0 0 16 16"><circle cx="8" cy="8" r="7.300" stroke="#4a4a4a" fill="none" stroke-width="1" stroke-linecap="round" stroke-linejoin="round" stroke-width="1.100"/><path d="M9 3.200l-3.600 5.400h2.400l-.9 4.400 3.800-5.800h-2.500z" fill="#4a4a4a"/></svg><div style="position:absolute;left:116.2px;top:673.2700000000001px;height:20px;line-height:20px;font-size:15px;font-weight:400;color:#2b2b2b;white-space:pre;letter-spacing:-0.33px;-webkit-text-stroke:0.2px;">Schermen</div><svg class="abs" style="left:88px;top:674.9px" width="16" height="16" viewBox="0 0 16 16"><rect x=".500" y=".500" width="15" height="11.600" rx="1.800" stroke="#4a4a4a" fill="none" stroke-width="1" stroke-linecap="round" stroke-linejoin="round" stroke-width="1.100"/><path d="M1 1.200l13.800 10.400M2.400 11.400l0-6 7.600 6z" stroke="#4a4a4a" fill="none" stroke-width="1" stroke-linecap="round" stroke-linejoin="round" stroke-width=".9"/><path d="M3.600 7.600l2.800 2.600h-2.800z" fill="#4a4a4a"/><path d="M6.200 12.300h3.600l.5 2h-4.600z" fill="#4a4a4a"/><rect x="4" y="14.200" width="8" height="1.200" rx=".4" fill="#4a4a4a"/></svg><div style="position:absolute;left:116.2px;top:718.1600000000001px;height:20px;line-height:20px;font-size:15px;font-weight:400;color:#2b2b2b;white-space:pre;letter-spacing:-0.01px;word-spacing:-0.75px;-webkit-text-stroke:0.2px;">Muis en touchpad</div><svg class="abs" style="left:88px;top:719.8px" width="16" height="16" viewBox="0 0 16 16"><path d="M8 .700c2.600 0 4.300.5 4.300 2 0 1.500 1 3.500 1 6.500 0 3.500-2.300 6.100-5.300 6.100s-5.300-2.600-5.300-6.100c0-3 1-5 1-6.500 0-1.500 1.700-2 4.300-2z" stroke="#4a4a4a" fill="none" stroke-width="1" stroke-linecap="round" stroke-linejoin="round" transform="translate(.3 0) scale(.96 1)"/><path d="M8 1v3.600" stroke="#4a4a4a" fill="none" stroke-width="1" stroke-linecap="round" stroke-linejoin="round"/></svg><div style="position:absolute;left:116.2px;top:763.0500000000001px;height:20px;line-height:20px;font-size:15px;font-weight:400;color:#2b2b2b;white-space:pre;letter-spacing:0.22px;-webkit-text-stroke:0.2px;">Toetsenbord</div><svg class="abs" style="left:88px;top:764.7px" width="16" height="16" viewBox="0 0 16 16"><rect x=".500" y="2.500" width="14.600" height="11" rx="2" stroke="#4a4a4a" fill="none" stroke-width="1" stroke-linecap="round" stroke-linejoin="round" stroke-width="1.100"/><rect x="2.9" y="5.400" width=".9" height="1.300" fill="#4a4a4a"/><rect x="5.1" y="5.400" width=".9" height="1.300" fill="#4a4a4a"/><rect x="7.3" y="5.400" width=".9" height="1.300" fill="#4a4a4a"/><rect x="9.5" y="5.400" width=".9" height="1.300" fill="#4a4a4a"/><rect x="11.7" y="5.400" width=".9" height="1.300" fill="#4a4a4a"/><rect x="3.9" y="7.600" width=".9" height="1.300" fill="#4a4a4a"/><rect x="6.1" y="7.600" width=".9" height="1.300" fill="#4a4a4a"/><rect x="8.299999999999999" y="7.600" width=".9" height="1.300" fill="#4a4a4a"/><rect x="10.5" y="7.600" width=".9" height="1.300" fill="#4a4a4a"/><rect x="2.900" y="9.800" width=".9" height="1.300" fill="#4a4a4a"/><rect x="5" y="9.800" width="5.600" height="1.300" fill="#4a4a4a"/><rect x="11.800" y="9.800" width=".9" height="1.300" fill="#4a4a4a"/></svg><div style="position:absolute;left:116.2px;top:807.94px;height:20px;line-height:20px;font-size:15px;font-weight:400;color:#2b2b2b;white-space:pre;letter-spacing:0.16px;-webkit-text-stroke:0.2px;">Printers</div><svg class="abs" style="left:88px;top:809.5px" width="16" height="16" viewBox="0 0 16 16"><rect x="3.500" y=".500" width="9" height="4.300" stroke="#4a4a4a" fill="none" stroke-width="1" stroke-linecap="round" stroke-linejoin="round"/><path d="M3.300 13.100h-1.300c-.9 0-1.500-.6-1.500-1.500v-5.200c0-1 .7-1.700 1.700-1.700h11.600c1 0 1.700.7 1.700 1.700v5.200c0 .9-.6 1.500-1.500 1.500h-1.300" stroke="#4a4a4a" fill="none" stroke-width="1" stroke-linecap="round" stroke-linejoin="round"/><rect x="3.500" y="9.600" width="9" height="6" stroke="#4a4a4a" fill="none" stroke-width="1" stroke-linecap="round" stroke-linejoin="round"/><path d="M5.400 11.600h5.200M5.400 13.400h5.200" stroke="#4a4a4a" fill="none" stroke-width="1" stroke-linecap="round" stroke-linejoin="round" stroke-width=".8"/></svg><svg class="abs" style="left:337px;top:404.4px" width="12" height="16" viewBox="0 0 12 16" fill="none" stroke="#555" stroke-width="1.100"><path d="M3.600 1.300l5.400 6.700-5.400 6.700"/></svg><svg class="abs" style="left:337px;top:449.3px" width="12" height="16" viewBox="0 0 12 16" fill="none" stroke="#555" stroke-width="1.100"><path d="M3.600 1.300l5.400 6.700-5.400 6.700"/></svg><div style="position:absolute;left:492.3px;top:96.5px;height:20px;line-height:20px;font-size:15px;font-weight:700;color:#3a3a3a;white-space:pre;letter-spacing:0.20px;-webkit-text-stroke:0px;">Stijl</div><div class="abs" style="left:492px;top:127px;width:599px;height:277px;background:#fff;border:1px solid #dbdbdb;border-radius:9px;"></div><div class="abs" style="left:493px;top:348px;width:597px;height:1px;background:#e2e2e2"></div><div class="abs" style="left:507px;top:142px;width:273px;height:166px;border:4px solid #0073e5;border-radius:10px;background:#fff"></div><div class="abs" style="left:515px;top:150px;width:257px;height:150px;border-radius:5px;background:linear-gradient(#82b8f0 0%,#80b6f0 30%,#5aa5f4 55%,#2f8ff7 78%,#0a7cf8 100%);overflow:hidden"><div class="abs" style="left:96px;top:19px;width:100px;height:77px;border-radius:6px;background:#4d4d4d;box-shadow:0 1px 3px rgba(0,0,0,.25)"></div><div class="abs" style="left:96px;top:36px;width:100px;height:1px;background:#616161"></div><div class="abs" style="left:61px;top:54px;width:100px;height:77px;border-radius:6px;background:#fafafa;box-shadow:0 1px 3px rgba(0,0,0,.3);overflow:hidden"><div style="height:17px;background:#dedede"></div><div style="height:1px;background:#d0d0d0"></div></div></div><div class="abs" style="left:811px;top:150px;width:256px;height:150px;border-radius:5px;background:linear-gradient(#82b8f0 0%,#80b6f0 30%,#5aa5f4 55%,#2f8ff7 78%,#0a7cf8 100%);overflow:hidden"><div class="abs" style="left:96px;top:19px;width:100px;height:77px;border-radius:6px;background:#3f3f3f;box-shadow:0 1px 3px rgba(0,0,0,.25)"></div><div class="abs" style="left:96px;top:36px;width:100px;height:1px;background:#505050"></div><div class="abs" style="left:61px;top:54px;width:100px;height:77px;border-radius:6px;background:#242424;box-shadow:0 1px 3px rgba(0,0,0,.35);overflow:hidden"><div style="height:17px;background:#2e2e2e"></div><div style="height:1px;background:#3c3c3c"></div></div></div><div style="position:absolute;left:339.5px;width:600px;text-align:center;margin-left:0.08px;top:318.0px;height:20px;line-height:20px;font-size:15px;font-weight:400;color:#2b2b2b;white-space:pre;letter-spacing:0.16px;-webkit-text-stroke:0.2px;">Licht</div><div style="position:absolute;left:635.5px;width:600px;text-align:center;margin-left:-0.11px;top:318.0px;height:20px;line-height:20px;font-size:15px;font-weight:400;color:#2b2b2b;white-space:pre;letter-spacing:-0.23px;-webkit-text-stroke:0.2px;">Donker</div><div style="position:absolute;left:507.5px;top:366.0px;height:20px;line-height:20px;font-size:15px;font-weight:400;color:#2b2b2b;white-space:pre;letter-spacing:0.03px;-webkit-text-stroke:0.2px;">Color</div><svg class="abs" style="left:580px;top:354px" width="500" height="44" viewBox="580 354 500 44"><circle cx="601.5" cy="376" r="13.300" fill="#e95420"/><circle cx="651.4" cy="376" r="13.300" fill="#787859"/><circle cx="701.4" cy="376" r="13.300" fill="#657b69"/><circle cx="751.3" cy="376" r="13.300" fill="#4b8501"/><circle cx="801.3" cy="376" r="13.300" fill="#03875b"/><circle cx="851.2" cy="376" r="13.300" fill="#308280"/><circle cx="901.1" cy="376" r="13.300" fill="#0073e5"/><circle cx="901.1" cy="376" r="17.300" fill="none" stroke="#0073e5" stroke-width="3.200"/><circle cx="951.1" cy="376" r="13.300" fill="#7764d8"/><circle cx="1001.0" cy="376" r="13.300" fill="#b34cb3"/><circle cx="1051.0" cy="376" r="13.300" fill="#da3450"/></svg><div style="position:absolute;left:492.3px;top:443.3px;height:20px;line-height:20px;font-size:15px;font-weight:700;color:#3a3a3a;white-space:pre;letter-spacing:-0.13px;-webkit-text-stroke:0px;">Bureaubladpictogrammen</div><div class="abs" style="left:492px;top:474px;width:599px;height:165px;background:#fff;border:1px solid #dbdbdb;border-radius:9px;"></div><div class="abs" style="left:493px;top:528px;width:597px;height:1px;background:#e2e2e2"></div><div class="abs" style="left:493px;top:583px;width:597px;height:1px;background:#e2e2e2"></div><div style="position:absolute;left:507.5px;top:491.0px;height:20px;line-height:20px;font-size:15px;font-weight:400;color:#2b2b2b;white-space:pre;letter-spacing:0.42px;-webkit-text-stroke:0.2px;">Grootte</div><div style="position:absolute;left:448.0999999999999px;width:600px;text-align:right;margin-left:0.44px;top:491.0px;height:20px;line-height:20px;font-size:15px;font-weight:400;color:#2b2b2b;white-space:pre;letter-spacing:0.44px;-webkit-text-stroke:0.2px;">Normal</div><div style="position:absolute;left:507.5px;top:546.0px;height:20px;line-height:20px;font-size:15px;font-weight:400;color:#2b2b2b;white-space:pre;letter-spacing:0.06px;word-spacing:-0.75px;-webkit-text-stroke:0.2px;">Positie van nieuwe pictogrammen</div><div style="position:absolute;left:448.0999999999999px;width:600px;text-align:right;margin-left:0.34px;top:546.0px;height:20px;line-height:20px;font-size:15px;font-weight:400;color:#2b2b2b;white-space:pre;letter-spacing:0.34px;word-spacing:-0.75px;-webkit-text-stroke:0.2px;">Bottom Right</div><div style="position:absolute;left:507.5px;top:601.0px;height:20px;line-height:20px;font-size:15px;font-weight:400;color:#2b2b2b;white-space:pre;letter-spacing:0.03px;word-spacing:-0.75px;-webkit-text-stroke:0.2px;">Persoonlijke map tonen</div><svg class="abs" style="left:1060px;top:493px" width="16" height="16" viewBox="0 0 16 16" fill="none" stroke="#3d3d3d" stroke-width="1.100"><path d="M3.200 6l4.800 4.600 4.800-4.600"/></svg><svg class="abs" style="left:1060px;top:548px" width="16" height="16" viewBox="0 0 16 16" fill="none" stroke="#3d3d3d" stroke-width="1.100"><path d="M3.200 6l4.800 4.600 4.800-4.600"/></svg><div class="abs" style="left:1026px;top:598px;width:50px;height:26px;border-radius:13px;background:#0073e5"></div><div class="abs" style="left:1052px;top:600px;width:22px;height:22px;border-radius:11px;background:#fff;box-shadow:0 1px 2px rgba(0,0,0,.25)"></div><div style="position:absolute;left:492.3px;top:677.5px;height:20px;line-height:20px;font-size:15px;font-weight:700;color:#3a3a3a;white-space:pre;letter-spacing:0.15px;-webkit-text-stroke:0px;">Starter</div><div class="abs" style="left:492px;top:708px;width:599px;height:134px;overflow:hidden"><div class="abs" style="left:0;top:0;width:599px;height:200px;background:#fff;border:1px solid #dbdbdb;border-radius:9px"></div></div><div class="abs" style="left:493px;top:762px;width:597px;height:1px;background:#e2e2e2"></div><div class="abs" style="left:493px;top:817px;width:597px;height:1px;background:#e2e2e2"></div><div style="position:absolute;left:507.5px;top:718.3px;height:20px;line-height:20px;font-size:15px;font-weight:400;color:#2b2b2b;white-space:pre;letter-spacing:0.16px;word-spacing:-0.75px;-webkit-text-stroke:0.2px;">Starter automatisch verbergen</div><div style="position:absolute;left:507.5px;top:734.2px;height:20px;line-height:20px;font-size:12px;font-weight:400;color:#6e6e6e;white-space:pre;letter-spacing:0.38px;word-spacing:-0.60px;-webkit-text-stroke:0.2px;">De Starter wordt verborgen zodra er een venster over wordt geplaatst.</div><div class="abs" style="left:1026px;top:722px;width:50px;height:26px;border-radius:13px;background:#cfcfcf"></div><div class="abs" style="left:1028px;top:724px;width:22px;height:22px;border-radius:11px;background:#fff;box-shadow:0 1px 2px rgba(0,0,0,.25)"></div><div style="position:absolute;left:507.5px;top:773.3px;height:20px;line-height:20px;font-size:15px;font-weight:400;color:#2b2b2b;white-space:pre;letter-spacing:-0.16px;-webkit-text-stroke:0.2px;">Paneelmodus</div><div style="position:absolute;left:507.5px;top:789.2px;height:20px;line-height:20px;font-size:12px;font-weight:400;color:#6e6e6e;white-space:pre;letter-spacing:0.34px;word-spacing:-0.60px;-webkit-text-stroke:0.2px;">Het dock loopt door tot aan de schermrand.</div><div class="abs" style="left:1026px;top:777px;width:50px;height:26px;border-radius:13px;background:#0073e5"></div><div class="abs" style="left:1052px;top:779px;width:22px;height:22px;border-radius:11px;background:#fff;box-shadow:0 1px 2px rgba(0,0,0,.25)"></div><div class="abs" style="left:492px;top:818px;width:598px;height:24px;overflow:hidden"><div class="abs" style="left:15.500px;top:17px;-webkit-text-stroke:.2px;font-size:15px;line-height:20px;color:#2b2b2b;white-space:pre">Pictogramgrootte</div><div class="abs" style="left:321.500px;top:19.500px;font-size:12px;line-height:16px;color:#2b2b2b">48</div><div class="abs" style="left:486.500px;top:17.500px;width:20px;height:20px;border-radius:10px;background:#fff;border:1px solid #c8c8c8"></div></div>
</body></html>
